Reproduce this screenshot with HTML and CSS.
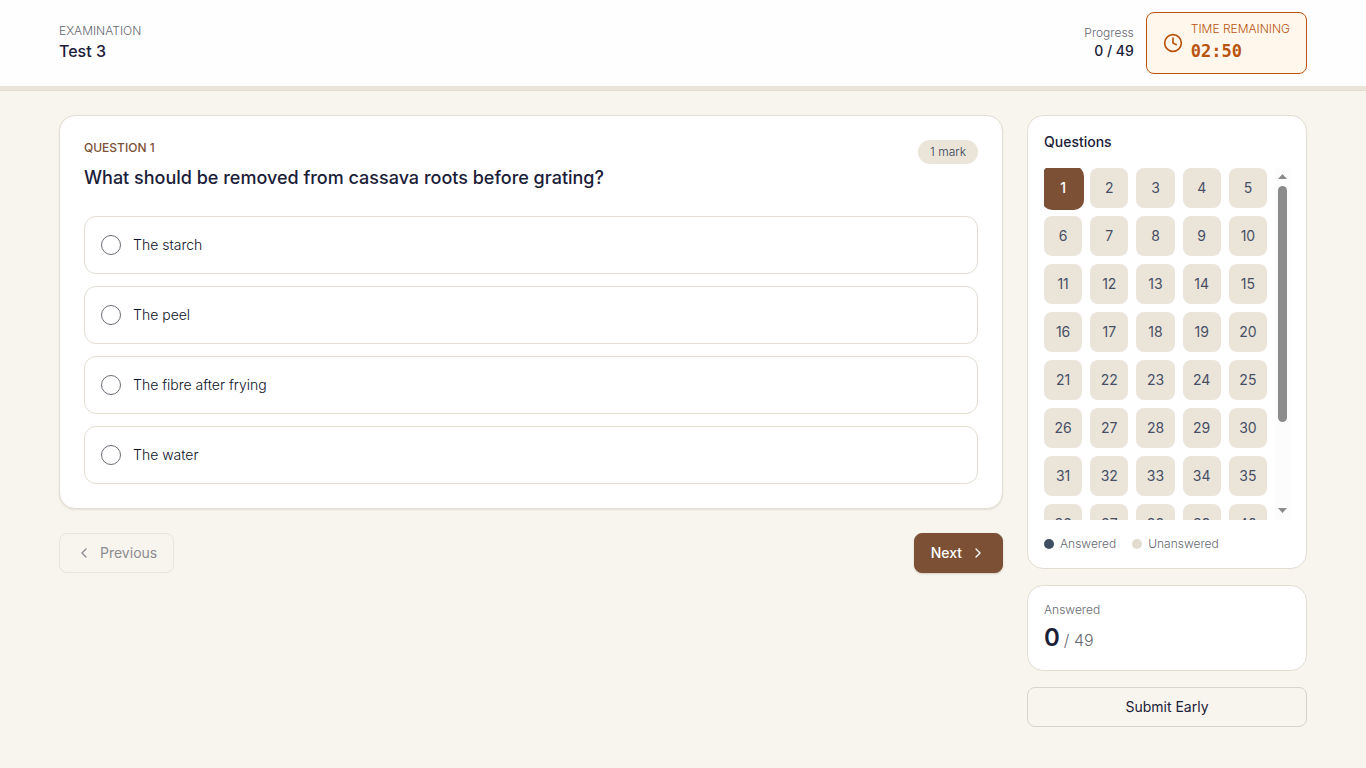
FILE: index.html
```html
<!DOCTYPE html>
<html lang="en">
<head>
<meta charset="utf-8">
<meta name="viewport" content="width=device-width, initial-scale=1">
<title>Test 3</title>
<link rel="stylesheet" href="styles.css">
</head>
<body>
<header class="topbar">
  <div class="container topbar-inner">
    <div>
      <p class="caption">EXAMINATION</p>
      <h1 class="exam-title">Test 3</h1>
    </div>
    <div class="status">
      <div class="progress">
        <p class="caption">Progress</p>
        <p class="progress-value">0 / 49</p>
      </div>
      <div class="timer">
        <svg class="timer-icon" viewBox="0 0 24 24" aria-hidden="true"><circle cx="12" cy="12" r="10"/><path d="M12 6v6l4 2"/></svg>
        <div>
          <p class="timer-label">TIME REMAINING</p>
          <p class="timer-value">02:50</p>
        </div>
      </div>
    </div>
  </div>
</header>
<main class="container layout">
  <section class="main-column">
    <article class="card question-card">
      <div class="question-head">
        <div>
          <p class="question-number">QUESTION 1</p>
          <h2 class="question-text" id="question">What should be removed from cassava roots before grating?</h2>
        </div>
        <span class="badge">1 mark</span>
      </div>
      <div class="options" role="radiogroup" aria-labelledby="question">
        <label class="option"><input class="radio" type="radio" name="answer"><span>The starch</span></label>
        <label class="option"><input class="radio" type="radio" name="answer"><span>The peel</span></label>
        <label class="option"><input class="radio" type="radio" name="answer"><span>The fibre after frying</span></label>
        <label class="option"><input class="radio" type="radio" name="answer"><span>The water</span></label>
      </div>
    </article>
    <nav class="pager">
      <button class="button button-outline" type="button" disabled><svg class="chevron" viewBox="0 0 24 24" aria-hidden="true"><path d="m15 18-6-6 6-6"/></svg>Previous</button>
      <button class="button button-primary" type="button">Next<svg class="chevron" viewBox="0 0 24 24" aria-hidden="true"><path d="m9 18 6-6-6-6"/></svg></button>
    </nav>
  </section>
  <aside class="sidebar">
    <section class="card side-card navigator">
      <h2 class="side-title">Questions</h2>
      <div class="scroll-area">
        <div class="scroller">
          <div class="number-grid">
            <button class="number current" type="button">1</button>
            <button class="number" type="button">2</button>
            <button class="number" type="button">3</button>
            <button class="number" type="button">4</button>
            <button class="number" type="button">5</button>
            <button class="number" type="button">6</button>
            <button class="number" type="button">7</button>
            <button class="number" type="button">8</button>
            <button class="number" type="button">9</button>
            <button class="number" type="button">10</button>
            <button class="number" type="button">11</button>
            <button class="number" type="button">12</button>
            <button class="number" type="button">13</button>
            <button class="number" type="button">14</button>
            <button class="number" type="button">15</button>
            <button class="number" type="button">16</button>
            <button class="number" type="button">17</button>
            <button class="number" type="button">18</button>
            <button class="number" type="button">19</button>
            <button class="number" type="button">20</button>
            <button class="number" type="button">21</button>
            <button class="number" type="button">22</button>
            <button class="number" type="button">23</button>
            <button class="number" type="button">24</button>
            <button class="number" type="button">25</button>
            <button class="number" type="button">26</button>
            <button class="number" type="button">27</button>
            <button class="number" type="button">28</button>
            <button class="number" type="button">29</button>
            <button class="number" type="button">30</button>
            <button class="number" type="button">31</button>
            <button class="number" type="button">32</button>
            <button class="number" type="button">33</button>
            <button class="number" type="button">34</button>
            <button class="number" type="button">35</button>
            <button class="number" type="button">36</button>
            <button class="number" type="button">37</button>
            <button class="number" type="button">38</button>
            <button class="number" type="button">39</button>
            <button class="number" type="button">40</button>
            <button class="number" type="button">41</button>
            <button class="number" type="button">42</button>
            <button class="number" type="button">43</button>
            <button class="number" type="button">44</button>
            <button class="number" type="button">45</button>
            <button class="number" type="button">46</button>
            <button class="number" type="button">47</button>
            <button class="number" type="button">48</button>
            <button class="number" type="button">49</button>
          </div>
        </div>
        <div class="rail" aria-hidden="true">
          <svg class="rail-arrow" viewBox="0 0 9 5"><path d="M0 5 4.5 0 9 5z"/></svg>
          <div class="rail-track"><div class="rail-thumb"></div></div>
          <svg class="rail-arrow" viewBox="0 0 9 5"><path d="M0 0 4.5 5 9 0z"/></svg>
        </div>
      </div>
      <div class="legend">
        <span class="legend-item"><span class="dot dot-answered"></span>Answered</span>
        <span class="legend-item"><span class="dot"></span>Unanswered</span>
      </div>
    </section>
    <section class="card side-card">
      <p class="caption">Answered</p>
      <p class="total"><strong class="total-count">0</strong><span>/ 49</span></p>
    </section>
    <button class="button button-outline submit" type="button">Submit Early</button>
  </aside>
</main>
</body>
</html>
```

FILE: styles.css
```css
:root {
  --ink: #1a2038;
  --muted: #666972;
  --line: #e3ddd2;
  --sand: #ebe5d9;
  --brown: #7c5035;
  --amber: #b9540f;
  --page: #f8f5ee;
}

*, *::before, *::after { box-sizing: border-box; }

body {
  margin: 0;
  background: var(--page);
  color: var(--ink);
  font-family: Inter, "Liberation Sans", sans-serif;
  font-size: 14px;
  line-height: 20px;
}

h1, h2, p { margin: 0; }
button, input { font: inherit; color: inherit; margin: 0; }

.container {
  max-width: 1280px;
  margin: 0 auto;
  padding-inline: 16px;
}

.topbar {
  padding-bottom: 4px;
  border-bottom: 1px solid #e3ddd1;
  background: #fefefe;
  box-shadow: inset 0 -4px 0 var(--sand);
}

.topbar-inner {
  display: flex;
  align-items: center;
  justify-content: space-between;
  padding-block: 12px;
}

.caption {
  color: var(--muted);
  font-size: 12px;
  font-weight: 300;
  line-height: 16px;
}

.exam-title {
  font-size: 16px;
  font-weight: 500;
  line-height: 24px;
}

.status {
  display: flex;
  align-items: center;
  gap: 12px;
}

.progress { text-align: right; }
.progress-value { font-weight: 500; }

.timer {
  display: flex;
  align-items: center;
  gap: 8px;
  padding: 8px 16px;
  border: 1px solid var(--amber);
  border-radius: 8px;
  background: #fff7eb;
  color: var(--amber);
}

.timer-icon {
  width: 20px;
  height: 20px;
}

.timer-icon, .chevron {
  fill: none;
  stroke: currentColor;
  stroke-width: 2;
  stroke-linecap: round;
  stroke-linejoin: round;
}

.timer-label {
  font-size: 12px;
  font-weight: 300;
  line-height: 16px;
}

.timer-value {
  font-family: "DejaVu Sans Mono", monospace;
  font-size: 17px;
  font-weight: 700;
  line-height: 28px;
}

.layout {
  display: grid;
  grid-template-columns: minmax(0, 1fr) 280px;
  align-items: start;
  gap: 24px;
  padding-block: 24px;
}

.main-column {
  display: grid;
  gap: 24px;
}

.card {
  border: 1px solid var(--line);
  border-radius: 16px;
  background: #fff;
}

.question-card {
  padding: 24px;
  box-shadow: 0 1px 2px rgb(60 40 20 / 10%);
}

.question-head {
  display: flex;
  align-items: flex-start;
  justify-content: space-between;
  gap: 16px;
  margin-bottom: 24px;
}

.question-number {
  margin-bottom: 8px;
  color: var(--brown);
  font-size: 12px;
  font-weight: 500;
  line-height: 16px;
}

.question-text {
  font-size: 18px;
  font-weight: 500;
  line-height: 28px;
}

.badge {
  padding: 4px 12px;
  border-radius: 12px;
  background: var(--sand);
  color: #353f54;
  font-size: 12px;
  font-weight: 300;
  line-height: 16px;
  white-space: nowrap;
}

.options {
  display: grid;
  gap: 12px;
}

.option {
  display: flex;
  align-items: center;
  gap: 12px;
  padding: 16px;
  border: 1px solid var(--line);
  border-radius: 12px;
  color: #0c1226;
  font-weight: 300;
  line-height: 24px;
  cursor: pointer;
}

.radio {
  width: 20px;
  height: 20px;
  appearance: none;
  border: 1px solid #6c6e76;
  border-radius: 50%;
}

.radio:checked { border: 6px solid var(--brown); }

.pager {
  display: flex;
  justify-content: space-between;
}

.button {
  display: flex;
  align-items: center;
  justify-content: center;
  gap: 8px;
  height: 40px;
  padding: 0 16px;
  border: 1px solid transparent;
  border-radius: 8px;
  font-weight: 500;
}

.button-outline {
  border-color: #d8d4cd;
  background: transparent;
  font-weight: 400;
}

.button-outline:disabled {
  color: #8c8c91;
  border-color: #e8e4de;
}

.button-primary {
  border-color: var(--brown);
  background: var(--brown);
  color: #fff;
  box-shadow: 0 1px 2px rgb(60 40 20 / 20%);
}

.chevron {
  width: 16px;
  height: 16px;
}

.sidebar {
  display: grid;
  gap: 16px;
}

.side-card { padding: 16px; }

.navigator {
  display: grid;
  gap: 16px;
}

.side-title {
  font-size: 14px;
  font-weight: 500;
  line-height: 20px;
}

.scroll-area {
  display: flex;
  gap: 8px;
  height: 352px;
}

.scroller {
  flex: 1;
  overflow-y: auto;
  scrollbar-width: none;
}

.number-grid {
  display: grid;
  grid-template-columns: repeat(5, minmax(0, 1fr));
  gap: 8px;
}

.number {
  height: 40px;
  padding: 0;
  border: 0;
  border-radius: 8px;
  background: var(--sand);
  color: #474f65;
}

.number.current {
  background: var(--brown);
  color: #fff;
  font-weight: 500;
  box-shadow: 0 0 0 2px var(--brown);
}

.rail {
  display: flex;
  flex-direction: column;
  align-items: center;
  gap: 4px;
  width: 15px;
  padding: 6px 0 7px;
  background: #fcfcfc;
}

.rail-arrow {
  width: 9px;
  height: 5px;
  fill: #8b8b8b;
}

.rail-track {
  flex: 1;
  padding-top: 3px;
}

.rail-thumb {
  width: 9px;
  height: 236px;
  border-radius: 5px;
  background: #8b8b8b;
}

.legend {
  display: flex;
  gap: 16px;
  color: var(--muted);
  font-size: 12px;
  font-weight: 300;
  line-height: 16px;
}

.legend-item {
  display: flex;
  align-items: center;
  gap: 6px;
}

.dot {
  width: 10px;
  height: 10px;
  border-radius: 50%;
  background: #e2dccf;
}

.dot-answered { background: #3f4e61; }

.total {
  display: flex;
  align-items: baseline;
  gap: 4px;
  margin-top: 4px;
  color: var(--muted);
  font-size: 16px;
  font-weight: 300;
  line-height: 24px;
}

.total-count {
  color: var(--ink);
  font-size: 24px;
  font-weight: 600;
  line-height: 32px;
}

.submit { width: 100%; }
```
